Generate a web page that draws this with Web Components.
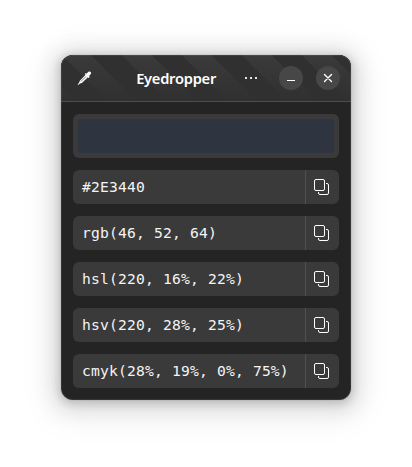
<!DOCTYPE html>
<html lang="en">
<head>
<meta charset="utf-8">
<title>Eyedropper</title>
<style>
body{margin:0;width:412px;height:467px;background:#fff;overflow:hidden;display:flex;justify-content:center;align-items:flex-start;font-family:"Noto Sans",sans-serif}
</style>
</head>
<body>
<app-window>
  <header-bar slot="header">Eyedropper</header-bar>
  <color-swatch color="#2e3440"></color-swatch>
  <color-row>#2E3440</color-row>
  <color-row>rgb(46, 52, 64)</color-row>
  <color-row>hsl(220, 16%, 22%)</color-row>
  <color-row>hsv(220, 28%, 25%)</color-row>
  <color-row>cmyk(28%, 19%, 0%, 75%)</color-row>
</app-window>
<script>
const define = (name, html, setup) => customElements.define(name, class extends HTMLElement {
  constructor() {
    super();
    this.attachShadow({mode: 'open'}).innerHTML = html;
  }
  connectedCallback() { if (setup) setup(this); }
});

define('app-window', `<style>
:host{display:flex;flex-direction:column;box-sizing:border-box;width:290px;height:345px;margin-top:55px;border-radius:12px;background:#242424;overflow:hidden;
box-shadow:0 0 0 1px rgba(0,0,0,.04),0 2px 8px 2px rgba(0,0,0,.15),0 3px 20px 9px rgba(0,0,0,.10),0 6px 32px 16px rgba(0,0,0,.045);position:relative}
:host::after{content:"";position:absolute;inset:0;border-radius:12px;box-shadow:inset 0 0 0 1px rgba(255,255,255,.08);pointer-events:none}
main{display:flex;flex-direction:column;gap:12px;padding:12px}
</style><slot name="header"></slot><main><slot></slot></main>`);

define('header-bar', `<style>
:host{display:grid;grid-template-columns:46px 1fr 70px 37px 37px;align-items:center;box-sizing:border-box;height:47px;padding-right:5px;border-bottom:1px solid #4d4d4d;color:#fff;
background:linear-gradient(to bottom,rgba(48,48,48,0) 0,rgba(48,48,48,1) 100%),repeating-linear-gradient(45deg,#3a3a3a 0 11.31px,#303030 11.31px 32.53px,#3a3a3a 32.53px 42.43px);background-color:#303030}
.title{justify-self:end;font-weight:600;font-size:14.67px;line-height:20px;letter-spacing:-.25px;white-space:nowrap;transform:scaleY(1.03);margin-right:-14px}
svg{display:block;justify-self:center}
.menu{justify-self:end;margin-right:15px}
.btn{display:grid;place-items:center;justify-self:center;width:24px;height:24px;border-radius:50%;background:#474747}
</style>
<svg width="15" height="15" viewBox="0 0 16 16"><path d="M10 2.8 12.2.9c1.5-1.2 3.6.8 2.5 2.3L12.8 5.4l.8.9-1.1 1.1-.9-.8-6.4 6.1-2.1.7L1.3 15l-.6-.6 1.5-1.9.8-2.1 6.2-6.3-.9-.9 1.1-1.1z" fill="#fff"/><path d="m4.2 11.200 5.400-5.400" stroke="#666" stroke-width=".9"/></svg>
<span class="title"><slot></slot></span>
<svg class="menu" width="12" height="2" viewBox="0 0 12 2"><path d="M0 0h2v2H0zM5 0h2v2H5zM10 0h2v2h-2z" fill="#e4e4e4"/></svg>
<span class="btn"><svg width="10" height="10" viewBox="0 0 10 10"><path d="M1 7h8v1H1z" fill="#fff"/></svg></span>
<span class="btn"><svg width="10" height="10" viewBox="0 0 10 10"><path d="m1.500 1.500 7 7m0-7-7 7" stroke="#fff" stroke-width="1.400" stroke-linecap="round"/></svg></span>`);

define('color-swatch', `<style>
:host{display:block;box-sizing:border-box;height:44px;padding:5px;border-radius:6px;background:#3a3a3a}
div{height:34px;border-radius:3px}
</style><div></div>`, el => { el.shadowRoot.querySelector('div').style.background = el.getAttribute('color'); });

define('color-row', `<style>
:host{display:flex;height:34px;border-radius:6px;background:#3a3a3a;color:#f4f4f4;font-family:"DejaVu Sans Mono",monospace;font-size:14.67px;letter-spacing:.17px;line-height:34px;white-space:pre}
.value{flex:1;padding-left:9px}
.copy{box-sizing:border-box;padding:0 1px 0 8px;display:grid;align-items:center;justify-items:start;width:34px;border-left:1px solid #505050}
svg{display:block}
</style><span class="value"><slot></slot></span><span class="copy"><svg width="16" height="16" viewBox="0 0 16 16" fill="none" stroke="#fff"><rect x=".5" y=".5" width="10" height="11" rx="1.5"/><path d="M12 4.500h1a1.500 1.500 0 0 1 1.500 1.500v8a1.500 1.500 0 0 1-1.500 1.500H6A1.500 1.500 0 0 1 4.500 14v-1"/></svg></span>`);
</script>
</body>
</html>
